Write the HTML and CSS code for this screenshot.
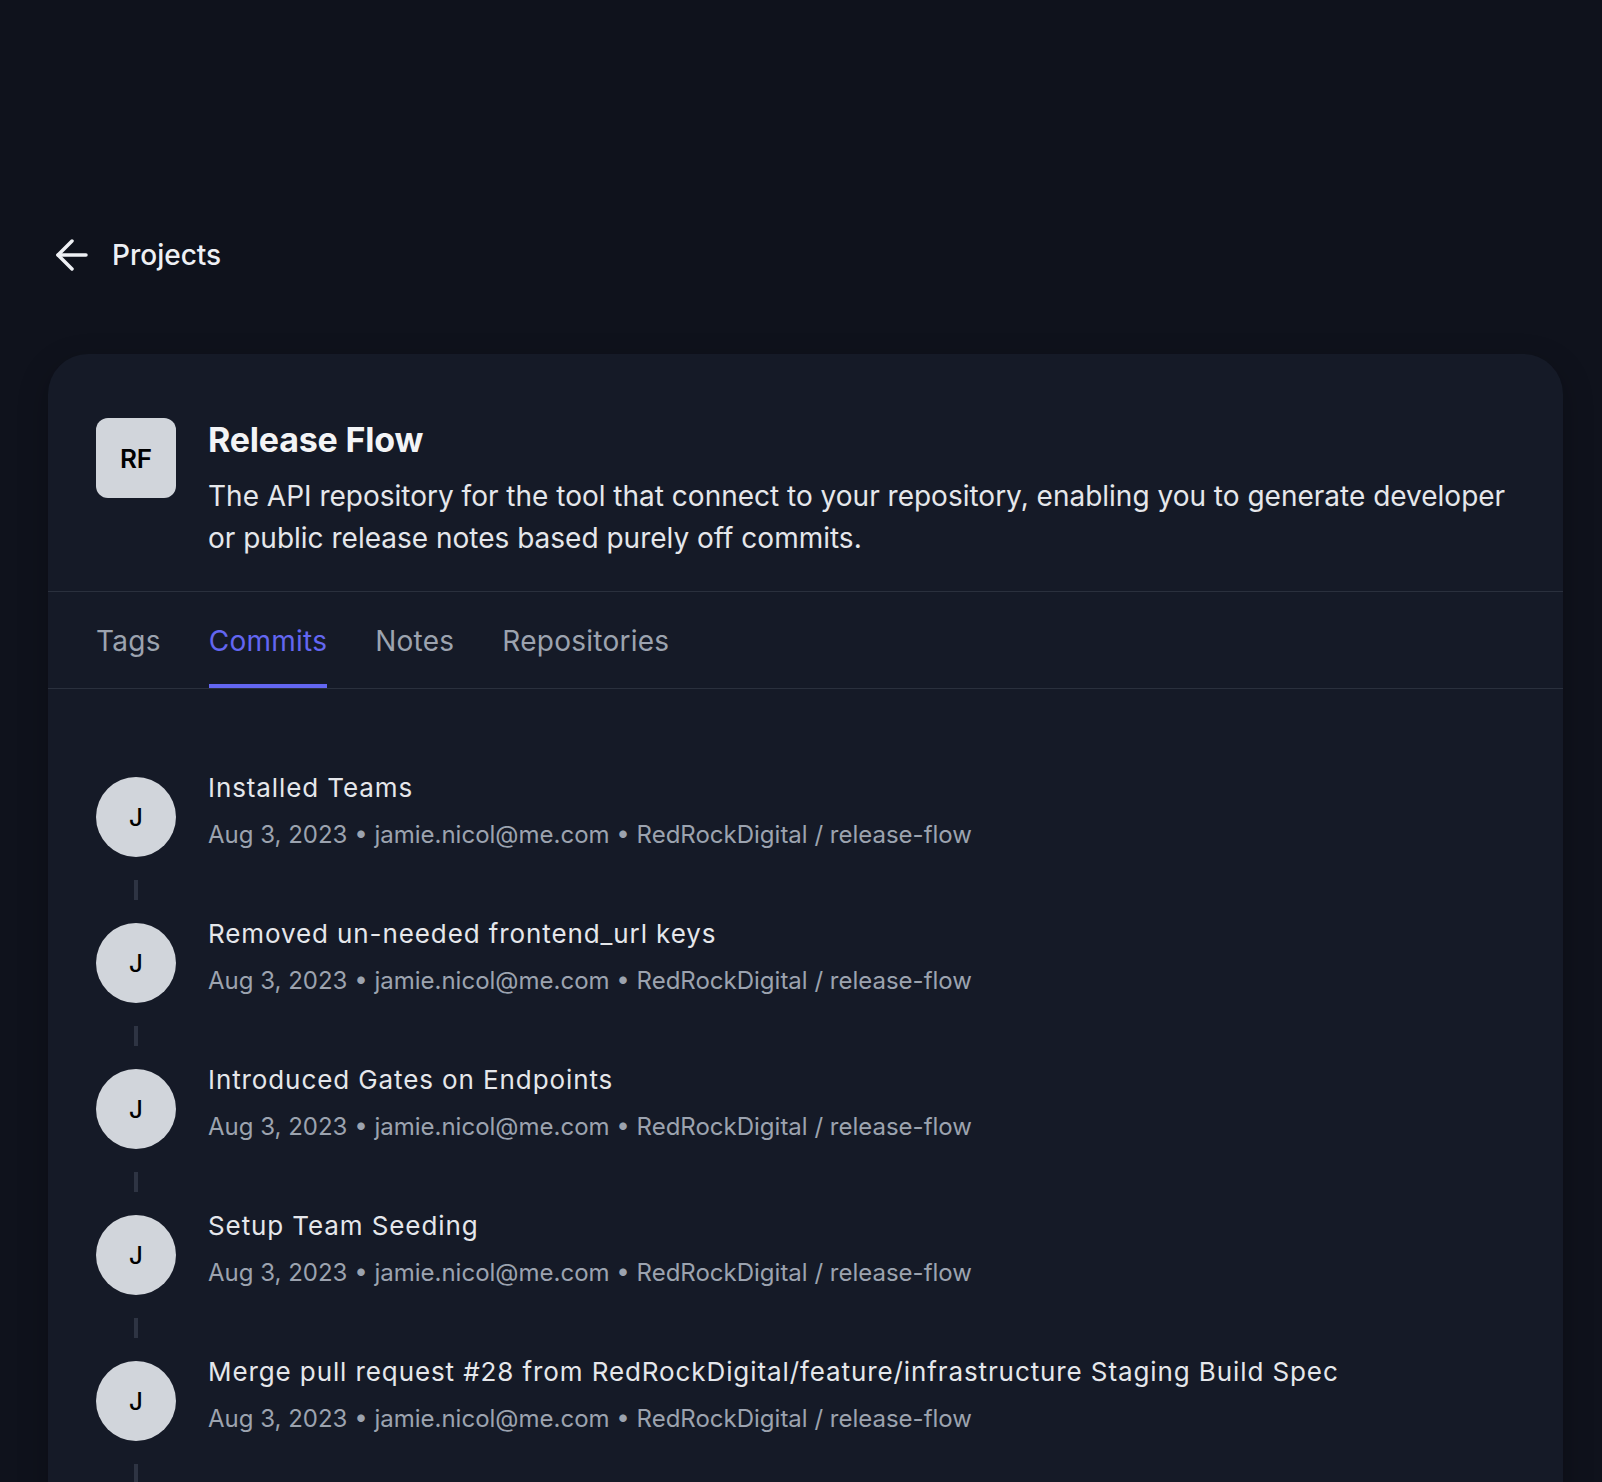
FILE: index.html
```html
<!DOCTYPE html>
<html lang="en">
<head>
<meta charset="utf-8">
<title>Release Flow · Commits</title>
<link rel="stylesheet" href="styles.css">
</head>
<body>
<main class="page">
  <a class="back" href="#">
    <svg class="back-icon" viewBox="0 0 24 24" width="48" height="48" fill="none" stroke="currentColor" stroke-width="1.75" stroke-linecap="round" stroke-linejoin="round"><path d="m12 19-7-7 7-7"/><path d="M19 12H5"/></svg>
    <span>Projects</span>
  </a>

  <section class="card">
    <header class="card-head">
      <div class="logo">RF</div>
      <div class="head-text">
        <h1 class="title">Release Flow</h1>
        <p class="desc">The API repository for the tool that connect to your repository, enabling you to generate developer or public release notes based purely off commits.</p>
      </div>
    </header>

    <nav class="tabs">
      <a class="tab" href="#">Tags</a>
      <a class="tab tab-active" href="#">Commits</a>
      <a class="tab" href="#">Notes</a>
      <a class="tab" href="#">Repositories</a>
    </nav>

    <ul class="commits">
      <li class="commit">
        <div class="rail"><div class="avatar">J</div><div class="link"></div></div>
        <div class="commit-body">
          <div class="commit-title">Installed Teams</div>
          <div class="commit-meta">Aug 3, 2023 • jamie.nicol@me.com • RedRockDigital / release-flow</div>
        </div>
      </li>
      <li class="commit">
        <div class="rail"><div class="avatar">J</div><div class="link"></div></div>
        <div class="commit-body">
          <div class="commit-title">Removed un-needed frontend_url keys</div>
          <div class="commit-meta">Aug 3, 2023 • jamie.nicol@me.com • RedRockDigital / release-flow</div>
        </div>
      </li>
      <li class="commit">
        <div class="rail"><div class="avatar">J</div><div class="link"></div></div>
        <div class="commit-body">
          <div class="commit-title">Introduced Gates on Endpoints</div>
          <div class="commit-meta">Aug 3, 2023 • jamie.nicol@me.com • RedRockDigital / release-flow</div>
        </div>
      </li>
      <li class="commit">
        <div class="rail"><div class="avatar">J</div><div class="link"></div></div>
        <div class="commit-body">
          <div class="commit-title">Setup Team Seeding</div>
          <div class="commit-meta">Aug 3, 2023 • jamie.nicol@me.com • RedRockDigital / release-flow</div>
        </div>
      </li>
      <li class="commit">
        <div class="rail"><div class="avatar">J</div><div class="link"></div></div>
        <div class="commit-body">
          <div class="commit-title">Merge pull request #28 from RedRockDigital/feature/infrastructure Staging Build Spec</div>
          <div class="commit-meta">Aug 3, 2023 • jamie.nicol@me.com • RedRockDigital / release-flow</div>
        </div>
      </li>
    </ul>
  </section>
</main>
</body>
</html>
```

FILE: styles.css
```css
html {
  scrollbar-width: none;
}

body {
  margin: 0;
  background: #0f121c;
  color: #e5e7eb;
  font-family: Inter, "Noto Sans", "Liberation Sans", sans-serif;
  overflow: hidden;
}

.page {
  padding: 231px 39px 0 48px;
}

/* back link */
.back {
  display: flex;
  align-items: center;
  gap: 16px;
  height: 48px;
  color: #eef0f4;
  text-decoration: none;
  font-size: 28px;
  font-weight: 500;
}

.back-icon {
  display: block;
  flex: none;
}

/* project card */
.card {
  margin-top: 75px;
  background: #151a27;
  border-radius: 40px;
  box-shadow: 0 10px 30px rgba(0, 0, 0, 0.25);
  padding-bottom: 48px;
}

.card-head {
  display: flex;
  gap: 32px;
  padding: 64px 48px 32px;
}

.logo {
  flex: none;
  width: 80px;
  height: 80px;
  border-radius: 12px;
  background: #d1d5db;
  color: #000;
  font-size: 26px;
  font-weight: 600;
  display: flex;
  align-items: center;
  justify-content: center;
}

.head-text {
  min-width: 0;
}

.title {
  margin: 0;
  font-size: 34px;
  line-height: 44px;
  font-weight: 700;
  letter-spacing: -0.2px;
  color: #f3f4f6;
}

.desc {
  margin: 13px 0 0;
  font-size: 28px;
  line-height: 42px;
  color: #e5e7eb;
}

/* tabs */
.tabs {
  display: flex;
  gap: 48px;
  padding: 0 48px;
  border-top: 1px solid #2a303d;
  border-bottom: 1px solid #2a303d;
}

.tab {
  padding: 28px 0 22px;
  border-bottom: 4px solid transparent;
  font-size: 28px;
  line-height: 42px;
  letter-spacing: 0.25px;
  color: #9ca3af;
  text-decoration: none;
}

.tab-active {
  color: #6366f1;
  border-bottom-color: #6366f1;
}

/* commit timeline */
.commits {
  list-style: none;
  margin: 0;
  padding: 79px 48px 0;
}

.commit {
  display: flex;
  gap: 32px;
}

.rail {
  flex: none;
  width: 80px;
  display: flex;
  flex-direction: column;
  align-items: center;
}

.avatar {
  margin-top: 9px;
  width: 80px;
  height: 80px;
  border-radius: 50%;
  background: #d1d5db;
  color: #000;
  font-size: 24px;
  font-weight: 500;
  display: flex;
  align-items: center;
  justify-content: center;
}

.link {
  width: 4px;
  height: 20px;
  margin: 23px 0 14px;
  background: #2e3443;
}

.commit-body {
  min-width: 0;
}

.commit-title {
  font-size: 26px;
  line-height: 39px;
  letter-spacing: 0.9px;
  color: #e5e7eb;
}

.commit-meta {
  margin-top: 10px;
  font-size: 24px;
  line-height: 36px;
  color: #9ca3af;
}
```
